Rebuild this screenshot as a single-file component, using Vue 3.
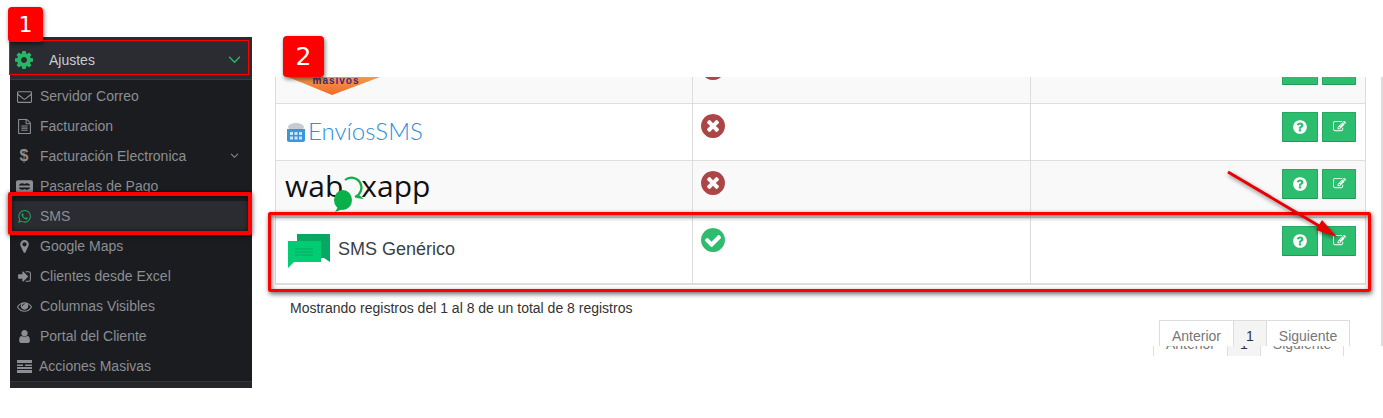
<script setup>
const cog = 'M1152 896q0-106-75-181t-181-75-181 75-75 181 75 181 181 75 181-75 75-181zm512-109v222q0 12-8 23t-20 13l-185 28q-19 54-39 91 35 50 107 138 10 12 10 25t-9 23q-27 37-99 108t-94 71q-12 0-26-9l-138-108q-44 23-91 38-16 136-29 186-7 28-36 28h-222q-14 0-24.5-8.5t-11.5-21.5l-28-184q-49-16-90-37l-141 107q-10 9-25 9-14 0-25-11-126-114-165-168-7-10-7-23 0-12 8-23 15-21 51-66.5t54-70.5q-27-50-41-99l-183-27q-13-2-21-12.5t-8-23.5v-222q0-12 8-23t19-13l186-28q14-46 39-92-40-57-107-138-10-12-10-24 0-10 9-23 26-36 98.5-107.5t94.5-71.5q13 0 26 10l138 107q44-23 91-38 16-136 29-186 7-28 36-28h222q14 0 24.5 8.5t11.5 21.5l28 184q49 16 90 37l142-107q9-9 24-9 13 0 25 10 129 119 165 170 7 8 7 22 0 12-8 23-15 21-51 66.5t-54 70.5q26 50 41 98l183 28q13 2 21 12.5t8 23.5z'
const question = 'M1024 1376v-192q0-14-9-23t-23-9h-192q-14 0-23 9t-9 23v192q0 14 9 23t23 9h192q14 0 23-9t9-23zm256-672q0-88-55.5-163t-138.5-116-170-41q-243 0-371 213-15 24 8 42l132 100q7 6 19 6 16 0 25-12 53-68 86-92 34-24 86-24 48 0 85.5 26t37.5 59q0 38-20 61t-68 45q-63 28-115.5 86.5t-52.5 125.5v36q0 14 9 23t23 9h192q14 0 23-9t9-23q0-19 21.5-49.5t54.5-49.5q32-18 49-28.5t46-35 44.5-48 28-60.5 12.5-81zm384 192q0 209-103 385.5t-279.5 279.5-385.5 103-385.5-103-279.5-279.5-103-385.5 103-385.5 279.5-279.5 385.5-103 385.5 103 279.5 279.5 103 385.5z'
const times = 'M1277 1122q0-26-19-45l-181-181 181-181q19-19 19-45 0-27-19-46l-90-90q-19-19-46-19-26 0-45 19l-181 181-181-181q-19-19-45-19-27 0-46 19l-90 90q-19 19-19 46 0 26 19 45l181 181-181 181q-19 19-19 45 0 27 19 46l90 90q19 19 46 19 26 0 45-19l181-181 181 181q19 19 45 19 27 0 46-19l90-90q19-19 19-46zm387-226q0 209-103 385.5t-279.5 279.5-385.5 103-385.5-103-279.5-279.5-103-385.5 103-385.5 279.5-279.5 385.5-103 385.5 103 279.5 279.5 103 385.5z'
const check = 'M1412 734q0-28-18-46l-91-90q-19-19-45-19t-45 19l-408 407-226-226q-19-19-45-19t-45 19l-91 90q-18 18-18 46 0 27 18 45l362 362q19 19 45 19 27 0 46-19l543-543q18-18 18-45zm252 162q0 209-103 385.5t-279.5 279.5-385.5 103-385.5-103-279.5-279.5-103-385.5 103-385.5 279.5-279.5 385.5-103 385.5 103 279.5 279.5 103 385.5z'
const edit = 'M888 1184l116-116-152-152-116 116v56h96v96h56zm440-720q-16-16-33 1l-350 350q-17 17-1 33t33-1l350-350q17-17 1-33zm80 594v190q0 119-84.5 203.5t-203.5 84.5h-832q-119 0-203.5-84.5t-84.5-203.5v-832q0-119 84.5-203.5t203.5-84.5h832q63 0 117 25 15 7 18 23 3 17-9 29l-49 49q-14 14-32 8-23-6-45-6h-832q-66 0-113 47t-47 113v832q0 66 47 113t113 47h832q66 0 113-47t47-113v-126q0-13 9-22l64-64q15-15 35-7t20 29zm-96-738l288 288-672 672h-288v-288zm444 132l-92 92-288-288 92-92q28-28 68-28t68 28l152 152q28 28 28 68t-28 68z'

const menu = [
  { label: 'Servidor Correo', path: 'M1664 1504v-768q-32 36-69 66-268 206-426 338-51 43-83 67t-86.5 48.5-102.5 24.5h-2q-48 0-102.5-24.5t-86.5-48.5-83-67q-158-132-426-338-37-30-69-66v768q0 13 9.5 22.5t22.5 9.5h1472q13 0 22.5-9.5t9.5-22.5zm0-1051v-24.5l-.5-13-3-12.5-5.5-9-9-7.5-14-2.5h-1472q-13 0-22.5 9.5t-9.5 22.5q0 168 147 284 193 152 401 317 6 5 35 29.5t46 37.5 44.5 31.5 50.5 27.5 43 9h2q20 0 43-9t50.5-27.5 44.5-31.5 46-37.5 35-29.5q208-165 401-317 54-43 100.5-115.5t46.5-131.5zm128-37v1088q0 66-47 113t-113 47h-1472q-66 0-113-47t-47-113v-1088q0-66 47-113t113-47h1472q66 0 113 47t47 113z' },
  { label: 'Facturacion', path: 'M1596 380q28 28 48 76t20 88v1152q0 40-28 68t-68 28h-1344q-40 0-68-28t-28-68v-1600q0-40 28-68t68-28h896q40 0 88 20t76 48zm-444-244v376h376q-10-29-22-41l-313-313q-12-12-41-22zm384 1528v-1024h-416q-40 0-68-28t-28-68v-416h-768v1536h1280zm-1024-864q0-14 9-23t23-9h704q14 0 23 9t9 23v64q0 14-9 23t-23 9h-704q-14 0-23-9t-9-23v-64zm736 224q14 0 23 9t9 23v64q0 14-9 23t-23 9h-704q-14 0-23-9t-9-23v-64q0-14 9-23t23-9h704zm0 256q14 0 23 9t9 23v64q0 14-9 23t-23 9h-704q-14 0-23-9t-9-23v-64q0-14 9-23t23-9h704z' },
  { label: 'Facturación Electronica', glyph: '$', arrow: true },
  { label: 'Pasarelas de Pago', kind: 'card' },
  { label: 'SMS', active: true, path: 'M1113 974q13 0 97.5 44t89.5 53q2 5 2 15 0 33-17 76-16 39-71 65.5t-102 26.5q-57 0-190-62-98-45-170-118t-148-185q-72-107-71-194v-8q3-91 74-158 24-22 52-22 6 0 18 1.5t19 1.5q19 0 26.5 6.5t15.5 27.5q8 20 33 88t25 75q0 21-34.5 57.5t-34.5 46.5q0 7 5 15 34 73 102 137 56 53 151 101 12 7 22 7 15 0 54-48.5t52-48.5zm-203 530q127 0 243.5-50t200.5-134 134-200.5 50-243.5-50-243.5-134-200.5-200.5-134-243.5-50-243.5 50-200.5 134-134 200.5-50 243.5q0 203 120 368l-79 233 242-77q158 104 345 104zm0-1382q153 0 292.5 60t240.5 161 161 240.5 60 292.5-60 292.5-161 240.5-240.5 161-292.5 60q-195 0-365-94l-417 134 136-405q-108-178-108-389 0-153 60-292.5t161-240.5 240.5-161 292.5-60z' },
  { label: 'Google Maps', path: 'M1152 640q0-106-75-181t-181-75-181 75-75 181 75 181 181 75 181-75 75-181zm256 0q0 109-33 179l-364 774q-16 33-47.5 52t-67.5 19-67.5-19-46.5-52l-365-774q-33-70-33-179 0-212 150-362t362-150 362 150 150 362z' },
  { label: 'Clientes desde Excel', path: 'M1312 896q0 26-19 45l-544 544q-19 19-45 19t-45-19-19-45v-288h-448q-26 0-45-19t-19-45v-384q0-26 19-45t45-19h448v-288q0-26 19-45t45-19 45 19l544 544q19 19 19 45zm352-352v704q0 119-84.5 203.5t-203.5 84.5h-320q-13 0-22.5-9.5t-9.5-22.5q0-4-1-20t-.5-26.5 3-23.5 10-19.5 20.5-6.5h320q66 0 113-47t47-113v-704q0-66-47-113t-113-47h-312l-11.5-1-11.5-3-8-5.5-7-9-2-13.5q0-4-1-20t-.5-26.5 3-23.5 10-19.5 20.5-6.5h320q119 0 203.5 84.5t84.5 203.5z' },
  { label: 'Columnas Visibles', path: 'M1664 960q-152-236-381-353 61 104 61 225 0 185-131.5 316.5t-316.5 131.5-316.5-131.5-131.5-316.5q0-121 61-225-229 117-381 353 133 205 333.5 326.5t434.5 121.5 434.5-121.5 333.5-326.5zm-720-384q0-20-14-34t-34-14q-125 0-214.5 89.5t-89.5 214.5q0 20 14 34t34 14 34-14 14-34q0-86 61-147t147-61q20 0 34-14t14-34zm848 384q0 34-20 69-140 230-376.5 368.5t-499.5 138.5-499.5-139-376.5-368q-20-35-20-69t20-69q140-229 376.5-368t499.5-139 499.5 139 376.5 368q20 35 20 69z' },
  { label: 'Portal del Cliente', path: 'M1536 1399q0 109-62.5 187t-150.5 78h-854q-88 0-150.5-78t-62.5-187q0-85 8.5-160.5t31.5-152 58.5-131 94-89 134.5-34.5q131 128 313 128t313-128q76 0 134.5 34.5t94 89 58.5 131 31.5 152 8.5 160.5zm-256-887q0 159-112.5 271.5t-271.5 112.5-271.5-112.5-112.5-271.5 112.5-271.5 271.5-112.5 271.5 112.5 112.5 271.5z' },
  { label: 'Acciones Masivas', kind: 'bars', tight: true },
]
</script>

<template>
  <div class="page">
    <aside class="sidebar">
      <div class="side-head">
        <svg class="head-cog" viewBox="128 128 1536 1536"><path :d="cog" /></svg>
        <span class="head-label">Ajustes</span>
        <svg class="head-chev" viewBox="0 0 14 10"><path d="M1 2l6 6 6-6" /></svg>
      </div>
      <ul class="side-menu">
        <li v-for="item in menu" :key="item.label" class="side-item" :class="{ active: item.active, tight: item.tight }">
          <span class="side-icon">
            <svg v-if="item.path" viewBox="0 0 1792 1792"><path :d="item.path" /></svg>
            <b v-else-if="item.glyph">{{ item.glyph }}</b>
            <svg v-else-if="item.kind === 'card'" class="wide" viewBox="0 0 18 13">
              <rect width="18" height="13" rx="2" />
              <circle cx="6.5" cy="6.5" r="3.4" fill="#1b1c1f" />
              <circle cx="11.5" cy="6.5" r="3.4" fill="#1b1c1f" />
              <rect y="5.5" width="18" height="2" />
            </svg>
            <svg v-else class="wide" viewBox="0 0 15 13">
              <path d="M0 0h15v3H0zM0 4.500h6v1.500H0zM8 4.500h7v1.500H8zM0 7h15v2H0zM0 10h15v3H0z" />
            </svg>
          </span>
          <span>{{ item.label }}</span>
          <svg v-if="item.arrow" class="item-chev" viewBox="0 0 10 7"><path d="M1 1l4 4 4-4" /></svg>
        </li>
      </ul>
      <div class="side-foot"></div>
    </aside>

    <main class="content">
      <div class="panel">
        <div class="table">
          <div class="row row-cut striped">
            <div class="cell">
              <svg class="logo-masivos" viewBox="0 0 92 18">
                <defs>
                  <linearGradient id="masivosFill" x1="0" y1="0" x2="0" y2="1">
                    <stop offset="0" stop-color="#f29a4a" />
                    <stop offset="1" stop-color="#ef6a2a" />
                  </linearGradient>
                </defs>
                <path d="M0 0h92L44 18z" fill="url(#masivosFill)" />
                <text x="48" y="7" text-anchor="middle">masivos</text>
              </svg>
            </div>
            <div class="cell">
              <svg class="status no" viewBox="128 128 1536 1536"><path :d="times" /></svg>
            </div>
            <div class="cell actions">
              <button class="btn btn-help"><svg viewBox="0 0 1792 1792"><path :d="question" /></svg></button>
              <button class="btn btn-edit"><svg viewBox="0 0 1792 1792"><path :d="edit" /></svg></button>
            </div>
          </div>

          <div class="row">
            <div class="cell logo-cell">
              <svg class="logo-env" viewBox="0 0 18 20">
                <ellipse cx="9" cy="5" rx="8" ry="4" fill="#c7ccd2" />
                <path d="M0 7h18v11a2 2 0 0 1-2 2H2a2 2 0 0 1-2-2z" fill="#3a97df" />
                <path d="M3 10h3v3H3zM7.5 10h3v3h-3zM12 10h3v3h-3zM3 14.500h3v3H3zM7.500 14.500h3v3h-3zM12 14.500h3v3h-3z" fill="#cfe6f8" />
              </svg>
              <span class="env-text">EnvíosSMS</span>
            </div>
            <div class="cell">
              <svg class="status no" viewBox="128 128 1536 1536"><path :d="times" /></svg>
            </div>
            <div class="cell actions">
              <button class="btn btn-help"><svg viewBox="0 0 1792 1792"><path :d="question" /></svg></button>
              <button class="btn btn-edit"><svg viewBox="0 0 1792 1792"><path :d="edit" /></svg></button>
            </div>
          </div>

          <div class="row striped">
            <div class="cell logo-cell">
              <span class="wab">wab</span>
              <svg class="wab-o" viewBox="0 0 34 40">
                <path d="M12 7a10 10 0 1 1 10 17" fill="none" stroke="#0cb04a" stroke-width="2.200" />
                <path d="M26 22l5 4-8-1z" fill="#0cb04a" />
                <ellipse cx="10" cy="27" rx="9" ry="10" fill="#0cb04a" />
                <path d="M5 34l-3 5 8-3z" fill="#0cb04a" />
              </svg>
              <span class="wab">xapp</span>
            </div>
            <div class="cell">
              <svg class="status no" viewBox="128 128 1536 1536"><path :d="times" /></svg>
            </div>
            <div class="cell actions">
              <button class="btn btn-help"><svg viewBox="0 0 1792 1792"><path :d="question" /></svg></button>
              <button class="btn btn-edit"><svg viewBox="0 0 1792 1792"><path :d="edit" /></svg></button>
            </div>
          </div>

          <div class="row row-last">
            <div class="cell logo-cell generic">
              <svg class="logo-sms" viewBox="0 0 42 35">
                <path d="M9 0h33v28l-6-4H9z" fill="#08a862" />
                <path d="M0 7h33v21H6l-6 6z" fill="#00cc74" />
                <path d="M7 15h18M7 18h18M7 21h18" stroke="#08a862" stroke-width="1" />
              </svg>
              <span class="generic-text">SMS Genérico</span>
            </div>
            <div class="cell">
              <svg class="status yes" viewBox="128 128 1536 1536"><path :d="check" /></svg>
            </div>
            <div class="cell actions">
              <button class="btn btn-help"><svg viewBox="0 0 1792 1792"><path :d="question" /></svg></button>
              <button class="btn btn-edit"><svg viewBox="0 0 1792 1792"><path :d="edit" /></svg></button>
            </div>
          </div>
        </div>

        <p class="info">Mostrando registros del 1 al 8 de un total de 8 registros</p>

        <div class="pager-row">
          <div class="pager">
            <span>Anterior</span><span class="current">1</span><span>Siguiente</span>
          </div>
        </div>
      </div>

      <div class="pager-ghost">
        <div class="pager">
          <span>Anterior</span><span class="current">1</span><span>Siguiente</span>
        </div>
      </div>
    </main>

    <!-- marcas encima de la captura -->
    <div class="badge badge-one">1</div>
    <div class="badge badge-two">2</div>
    <div class="mark mark-head"></div>
    <div class="mark mark-sms"></div>
    <div class="mark mark-row"></div>
    <svg class="arrow" viewBox="0 0 1383 418">
      <path d="M1228 172L1326 230" stroke="#e80000" stroke-width="3" />
      <path d="M1337 237L1316 230L1322 220z" fill="#e80000" />
    </svg>
  </div>
</template>

<style scoped>
.page {
  position: relative;
  display: flex;
  width: 1383px;
  height: 418px;
  overflow: hidden;
  background: #fff;
  font-family: "Liberation Sans", Arial, sans-serif;
  font-size: 14px;
  color: #333;
}

/* Sidebar */
.sidebar {
  flex: none;
  width: 242px;
  height: 351px;
  margin: 37px 0 0 10px;
  background: #1b1c1f;
  display: flex;
  flex-direction: column;
}
.side-head {
  flex: none;
  display: flex;
  align-items: center;
  height: 43px;
  padding: 3px 11px 0 5px;
  box-sizing: border-box;
  background: #2a2c31;
  border-bottom: 1px solid #3a3c41;
  color: #c9ccd1;
}
.head-cog {
  width: 18px;
  height: 18px;
  fill: #26b864;
}
.head-label {
  margin-left: 16px;
  flex: 1;
}
.head-chev {
  width: 13px;
  height: 9px;
  fill: none;
  stroke: #26b864;
  stroke-width: 1.600;
}
.side-menu {
  list-style: none;
  margin: 1px 0 0;
  padding: 0;
}
.side-item {
  display: flex;
  align-items: center;
  height: 30px;
  padding: 0 13px 0 6px;
  color: #8b8e94;
}
.side-item.active {
  background: #2a2c31;
}
.side-item.active svg {
  fill: #1fa45a;
}
.side-icon {
  flex: none;
  width: 16px;
  height: 16px;
  margin-right: 8px;
  display: flex;
  align-items: center;
  justify-content: center;
}
.side-item.tight .side-icon {
  margin-right: 7px;
}
.side-icon svg {
  width: 15px;
  height: 15px;
  fill: #8b8e94;
}
.side-icon svg.wide {
  flex: none;
  width: 17px;
  height: 13px;
}
.side-icon b {
  font-size: 16px;
}
.item-chev {
  width: 9px;
  height: 6px;
  margin-left: auto;
  fill: none;
  stroke: #8b8e94;
  stroke-width: 1.200;
}
.side-foot {
  flex: 1;
  background: #26272b;
  border-top: 1px solid #34363a;
}

/* Tabla */
.content {
  flex: none;
  width: 1108px;
  margin: 77px 0 0 23px;
}
.panel {
  height: 269px;
  overflow: hidden;
  border-right: 2px solid #dcdcdc;
}
.table {
  width: 1091px;
  border-left: 1px solid #ddd;
  border-right: 1px solid #ddd;
  box-sizing: border-box;
}
.row {
  display: grid;
  grid-template-columns: 417px 338px 1fr;
  height: 57px;
  box-sizing: border-box;
  border-bottom: 1px solid #ddd;
}
.row.striped {
  background: #f9f9f9;
}
.row-cut {
  height: 27px;
  overflow: hidden;
}
.row-last {
  height: 67px;
  border-bottom-width: 2px;
}
.cell {
  min-width: 0;
  padding: 10px 0 0 8px;
  border-right: 1px solid #ddd;
  box-sizing: border-box;
}
.cell:last-child {
  border-right: 0;
}
.logo-cell {
  display: flex;
  align-items: center;
  padding: 0 0 0 9px;
}
.status {
  display: block;
  width: 24px;
  height: 24px;
}
.status.no {
  fill: #ac4546;
}
.status.yes {
  fill: #2dbd6e;
}
.actions {
  display: flex;
  justify-content: flex-end;
  gap: 4px;
  padding: 8px 9px 0 0;
}
.btn {
  display: flex;
  align-items: center;
  justify-content: center;
  width: 36px;
  height: 30px;
  padding: 0;
  background: #2dbd6e;
  border: 1px solid #27a860;
  border-bottom-color: #219a55;
  border-radius: 1px;
}
.btn-edit {
  width: 34px;
}
.btn svg {
  fill: #fff;
}
.btn-help svg {
  width: 16px;
  height: 16px;
}
.btn-edit svg {
  width: 13px;
  height: 13px;
  margin-top: -2px;
}
.row-cut .status {
  margin-top: -31px;
}
.row-cut .actions {
  padding-top: 0;
}
.row-cut .btn {
  margin-top: -22px;
}
.row-cut .cell:first-child {
  padding: 0 0 0 12px;
}
.logo-masivos {
  display: block;
  width: 92px;
  height: 18px;
}
.logo-masivos text {
  font: bold 10px "Liberation Sans", Arial, sans-serif;
  letter-spacing: 1px;
  fill: #3b2a7a;
}
.logo-env {
  width: 18px;
  height: 20px;
  margin: 0 3px 0 2px;
}
.env-text {
  font-family: Lato, "Noto Sans", sans-serif;
  font-weight: 300;
  font-size: 24px;
  line-height: 1;
  margin-top: -3px;
  color: #2b8fe0;
}
.wab {
  font-family: "Open Sans", sans-serif;
  font-size: 30px;
  line-height: 1;
  color: #111;
  margin-top: -6px;
}
.wab-o {
  flex: none;
  width: 34px;
  height: 40px;
  margin: 8px -6px 0 -10px;
}
.generic {
  padding-left: 12px;
}
.logo-sms {
  width: 42px;
  height: 35px;
  margin: 2px 8px 0 0;
}
.generic-text {
  font-size: 18px;
  color: #3a3f45;
  margin-top: -3px;
}
.info {
  margin: 13px 0 0 15px;
  line-height: 20px;
}

/* Paginador */
.pager-row {
  display: flex;
  margin: 2px 0 0 884px;
}
.pager {
  display: flex;
  width: fit-content;
  border: 1px solid #ddd;
  border-bottom: 0;
  color: #777;
  line-height: 20px;
}
.pager span {
  padding: 5px 12px;
}
.pager .current {
  padding: 5px 12px;
  background: #f4f4f4;
  color: #333;
  border-left: 1px solid #ddd;
  border-right: 1px solid #ddd;
}
.pager-ghost {
  height: 10px;
  margin-left: 878px;
  overflow: hidden;
}
.pager-ghost .pager {
  margin-top: -18px;
  height: 40px;
}

/* Marcas */
.badge {
  position: absolute;
  display: flex;
  align-items: center;
  justify-content: center;
  background: #fe0000;
  color: #fff;
  border-radius: 4px;
  box-shadow: 1px 2px 4px rgba(0, 0, 0, 0.55);
  font-family: "DejaVu Sans", sans-serif;
}
.badge-one {
  left: 8px;
  top: 7px;
  width: 35px;
  height: 35px;
  font-size: 22px;
}
.badge-two {
  left: 283px;
  top: 36px;
  width: 41px;
  height: 41px;
  font-size: 25px;
}
.mark {
  position: absolute;
  box-sizing: border-box;
  border-style: solid;
  border-color: #fe0000;
}
.mark-head {
  left: 9px;
  top: 40px;
  width: 240px;
  height: 35px;
  border-width: 1px;
}
.mark-sms {
  left: 8px;
  top: 192px;
  width: 244px;
  height: 43px;
  border-width: 4px;
  border-radius: 2px;
  box-shadow: 0 1px 5px rgba(0, 0, 0, 0.7), inset 0 0 4px rgba(0, 0, 0, 0.6);
}
.mark-row {
  left: 268px;
  top: 212px;
  width: 1103px;
  height: 80px;
  border-width: 3px;
  border-radius: 2px;
  box-shadow: 1px 2px 5px rgba(0, 0, 0, 0.6), inset 1px 2px 5px rgba(0, 0, 0, 0.55);
}
.arrow {
  position: absolute;
  inset: 0;
  width: 1383px;
  height: 418px;
  pointer-events: none;
  filter: drop-shadow(1px 2px 2px rgba(0, 0, 0, 0.5));
}
</style>
